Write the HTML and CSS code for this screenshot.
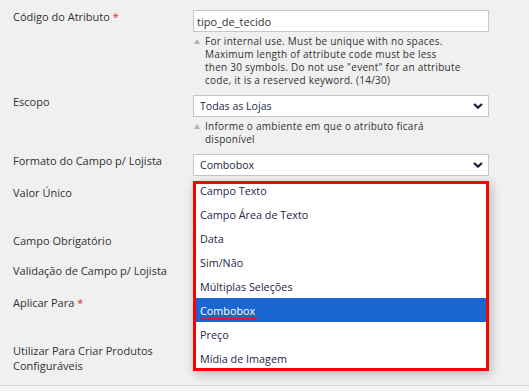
FILE: index.html
```html
<!DOCTYPE html>
<html lang="pt-BR">
<head>
<meta charset="utf-8">
<title>Atributo</title>
<link rel="stylesheet" href="styles.css">
</head>
<body>
<div class="page">
  <form class="form">
    <div class="row r1">
      <label class="label">Código do Atributo <span class="req">*</span></label>
      <div class="field">
        <input class="input" type="text" value="tipo_de_tecido">
        <div class="note">
          <svg class="tri" width="6" height="5" viewBox="0 0 6 5"><polygon points="3,0 6,5 0,5" fill="#b3b3b3"/></svg>
          <p>For internal use. Must be unique with no spaces.<br>Maximum length of attribute code must be less<br>then 30 symbols. Do not use "event" for an attribute<br>code, it is a reserved keyword. (14/30)</p>
        </div>
      </div>
    </div>
    <div class="row r2">
      <label class="label">Escopo</label>
      <div class="field">
        <div class="select"><span>Todas as Lojas</span>
          <svg class="chev" width="10" height="6" viewBox="0 0 10 6"><polyline points="1,1 5,4.6 9,1" fill="none" stroke="#1c1c48" stroke-width="2.2"/></svg>
        </div>
        <div class="note">
          <svg class="tri" width="6" height="5" viewBox="0 0 6 5"><polygon points="3,0 6,5 0,5" fill="#b3b3b3"/></svg>
          <p>Informe o ambiente em que o atributo ficará<br>disponível</p>
        </div>
      </div>
    </div>
    <div class="row r3">
      <label class="label">Formato do Campo p/ Lojista</label>
      <div class="field">
        <div class="select"><span>Combobox</span>
          <svg class="chev" width="10" height="6" viewBox="0 0 10 6"><polyline points="1,1 5,4.6 9,1" fill="none" stroke="#1c1c48" stroke-width="2.2"/></svg>
        </div>
      </div>
    </div>
    <div class="row r4">
      <label class="label">Valor Único</label>
      <div class="field"></div>
    </div>
    <div class="row r5">
      <label class="label">Campo Obrigatório</label>
      <div class="field"></div>
    </div>
    <div class="row r6">
      <label class="label">Validação de Campo p/ Lojista</label>
      <div class="field"></div>
    </div>
    <div class="row r7">
      <label class="label">Aplicar Para <span class="req">*</span></label>
      <div class="field"></div>
    </div>
    <div class="row r8">
      <label class="label">Utilizar Para Criar Produtos Configuráveis</label>
      <div class="field"></div>
    </div>

    <div class="dropdown">
      <ul class="options">
        <li>Campo Texto</li>
        <li>Campo Área de Texto</li>
        <li>Data</li>
        <li>Sim/Não</li>
        <li>Múltiplas Seleções</li>
        <li class="selected"><span class="mark">Combobox</span></li>
        <li>Preço</li>
        <li>Mídia de Imagem</li>
      </ul>
    </div>
  </form>
  <div class="footer"></div>
</div>
</body>
</html>
```

FILE: styles.css
```css
html, body {
  margin: 0;
  padding: 0;
}
body {
  background: #f0f0f0;
  font-family: "Open Sans", "DejaVu Sans", sans-serif;
  color: #303030;
  width: 529px;
  height: 391px;
  overflow: hidden;
}
.page {
  display: flex;
  flex-direction: column;
  height: 391px;
}
.form {
  position: relative;
  display: flex;
  flex-direction: column;
  padding: 10px 0 0 13px;
  height: 385px;
  box-sizing: border-box;
}
.row {
  display: grid;
  grid-template-columns: 180px 296px;
  margin-bottom: 8px;
}
.label {
  font-size: 11px;
  line-height: 15px;
  margin-top: -1px;
  color: #303030;
}
.r8 .label {
  width: 160px;
}
.req {
  color: #e22626;
}
.field {
  display: flex;
  flex-direction: column;
}
.input {
  box-sizing: border-box;
  height: 22px;
  width: 296px;
  margin: 0;
  border: 1px solid #c6c6c6;
  background: #fff;
  padding: 0 3px;
  font-family: "Open Sans", sans-serif;
  font-size: 11px;
  color: #303030;
  outline: none;
}
.select {
  box-sizing: border-box;
  height: 22px;
  border: 1px solid #c6c6c6;
  background: #fff;
  display: flex;
  align-items: center;
  justify-content: space-between;
  padding: 0 5px 0 6px;
  font-size: 10.6px;
  color: #26264a;
}
.note {
  display: flex;
  align-items: flex-start;
  margin-top: 3px;
  font-size: 10px;
  letter-spacing: 0.25px;
  line-height: 13px;
  color: #303030;
}
.tri {
  flex: none;
  margin: 4px 5px 0 1px;
}
.note p {
  margin: 0;
  white-space: nowrap;
}
.r1 .field { height: 77px; }
.r2 .field { height: 51px; }
.r3 .field { height: 24px; }
.r4 .field { height: 40px; }
.r5 .field { height: 22px; }
.r6 .field { height: 24px; }
.r7 .field { height: 40px; }
.r8 .field { height: 30px; }

.dropdown {
  position: absolute;
  left: 193px;
  top: 181px;
  width: 296px;
  height: 190px;
  box-sizing: border-box;
  border: 3px solid #ff0000;
  background: #fff;
  overflow: hidden;
  box-shadow: 2px 3px 10px rgba(0, 0, 0, 0.25);
}
.options {
  list-style: none;
  margin: -6px 0 0;
  padding: 0;
}
.options li {
  height: 24px;
  line-height: 25px;
  padding-left: 4px;
  font-size: 10.8px;
  color: #26264a;
}
.options li.selected {
  background: #1a66d1;
  color: #fff;
}
.mark {
  position: relative;
  display: inline-block;
}
.mark::after {
  content: "";
  position: absolute;
  left: 0;
  right: -2px;
  bottom: 3px;
  height: 2px;
  border-radius: 1px;
  background: #e8141d;
}
.footer {
  flex: 1;
  border-top: 1px solid #d4d4d4;
  background: #f5f5f5;
}
```
